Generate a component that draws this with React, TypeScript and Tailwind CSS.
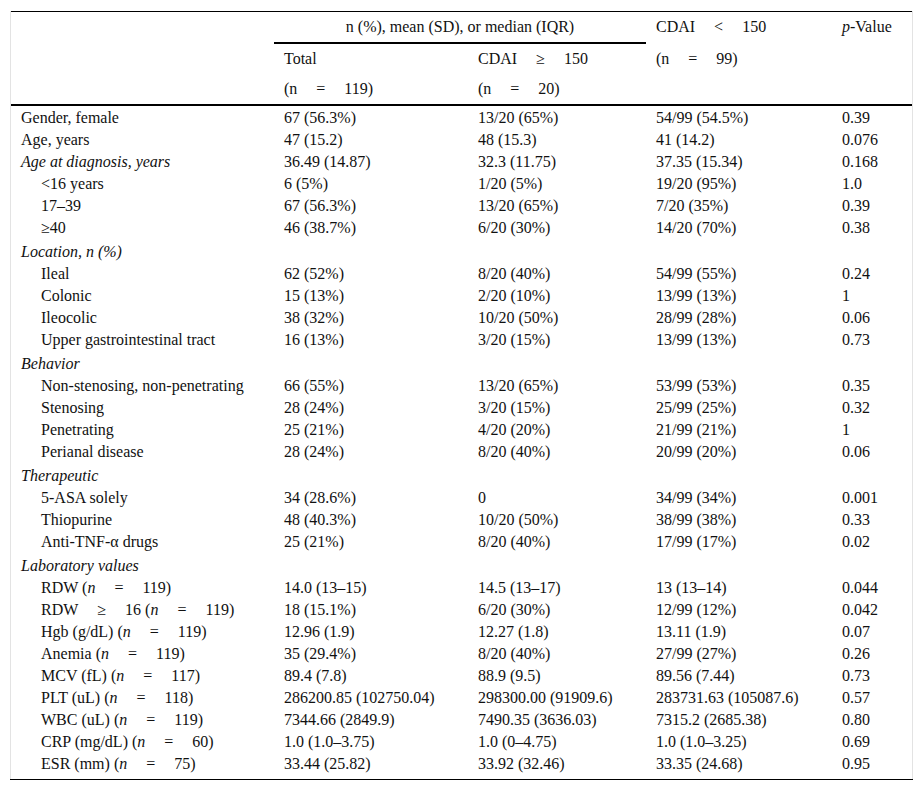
import React from "react";

// column widths: label | total | CDAI >= 150 | CDAI < 150 | p
const COLS = "grid grid-cols-[263px_194px_178px_186px_80px]";

const Gap = () => <span className="inline-block w-[19px]" />;

const Eq = ({ v, it }: { v: string; it?: boolean }) => (
  <>
    ({it ? <i>n</i> : "n"}
    <Gap />=<Gap />
    {v})
  </>
);

type Row = {
  label: React.ReactNode;
  indent?: boolean;
  italic?: boolean;
  section?: boolean;
  v?: string[];
};

const rows: Row[] = [
  { label: "Gender, female", v: ["67 (56.3%)", "13/20 (65%)", "54/99 (54.5%)", "0.39"] },
  { label: "Age, years", v: ["47 (15.2)", "48 (15.3)", "41 (14.2)", "0.076"] },
  { label: "Age at diagnosis, years", italic: true, v: ["36.49 (14.87)", "32.3 (11.75)", "37.35 (15.34)", "0.168"] },
  { label: "<16 years", indent: true, v: ["6 (5%)", "1/20 (5%)", "19/20 (95%)", "1.0"] },
  { label: "17–39", indent: true, v: ["67 (56.3%)", "13/20 (65%)", "7/20 (35%)", "0.39"] },
  { label: "≥40", indent: true, v: ["46 (38.7%)", "6/20 (30%)", "14/20 (70%)", "0.38"] },
  { label: "Location, n (%)", italic: true, section: true },
  { label: "Ileal", indent: true, v: ["62 (52%)", "8/20 (40%)", "54/99 (55%)", "0.24"] },
  { label: "Colonic", indent: true, v: ["15 (13%)", "2/20 (10%)", "13/99 (13%)", "1"] },
  { label: "Ileocolic", indent: true, v: ["38 (32%)", "10/20 (50%)", "28/99 (28%)", "0.06"] },
  { label: "Upper gastrointestinal tract", indent: true, v: ["16 (13%)", "3/20 (15%)", "13/99 (13%)", "0.73"] },
  { label: "Behavior", italic: true, section: true },
  { label: "Non-stenosing, non-penetrating", indent: true, v: ["66 (55%)", "13/20 (65%)", "53/99 (53%)", "0.35"] },
  { label: "Stenosing", indent: true, v: ["28 (24%)", "3/20 (15%)", "25/99 (25%)", "0.32"] },
  { label: "Penetrating", indent: true, v: ["25 (21%)", "4/20 (20%)", "21/99 (21%)", "1"] },
  { label: "Perianal disease", indent: true, v: ["28 (24%)", "8/20 (40%)", "20/99 (20%)", "0.06"] },
  { label: "Therapeutic", italic: true, section: true },
  { label: "5-ASA solely", indent: true, v: ["34 (28.6%)", "0", "34/99 (34%)", "0.001"] },
  { label: "Thiopurine", indent: true, v: ["48 (40.3%)", "10/20 (50%)", "38/99 (38%)", "0.33"] },
  { label: "Anti-TNF-α drugs", indent: true, v: ["25 (21%)", "8/20 (40%)", "17/99 (17%)", "0.02"] },
  { label: "Laboratory values", italic: true, section: true },
  { label: <>RDW <Eq v="119" it /></>, indent: true, v: ["14.0 (13–15)", "14.5 (13–17)", "13 (13–14)", "0.044"] },
  { label: <>RDW<Gap />≥<Gap />16 <Eq v="119" it /></>, indent: true, v: ["18 (15.1%)", "6/20 (30%)", "12/99 (12%)", "0.042"] },
  { label: <>Hgb (g/dL) <Eq v="119" it /></>, indent: true, v: ["12.96 (1.9)", "12.27 (1.8)", "13.11 (1.9)", "0.07"] },
  { label: <>Anemia <Eq v="119" it /></>, indent: true, v: ["35 (29.4%)", "8/20 (40%)", "27/99 (27%)", "0.26"] },
  { label: <>MCV (fL) <Eq v="117" it /></>, indent: true, v: ["89.4 (7.8)", "88.9 (9.5)", "89.56 (7.44)", "0.73"] },
  { label: <>PLT (uL) <Eq v="118" it /></>, indent: true, v: ["286200.85 (102750.04)", "298300.00 (91909.6)", "283731.63 (105087.6)", "0.57"] },
  { label: <>WBC (uL) <Eq v="119" it /></>, indent: true, v: ["7344.66 (2849.9)", "7490.35 (3636.03)", "7315.2 (2685.38)", "0.80"] },
  { label: <>CRP (mg/dL) <Eq v="60" it /></>, indent: true, v: ["1.0 (1.0–3.75)", "1.0 (0–4.75)", "1.0 (1.0–3.25)", "0.69"] },
  { label: <>ESR (mm) <Eq v="75" it /></>, indent: true, v: ["33.44 (25.82)", "33.92 (32.46)", "33.35 (24.68)", "0.95"] },
];

export default function App() {
  return (
    <div className="min-h-[791px] bg-white pt-[11px] pl-[10px] font-['Liberation_Serif',serif] text-[16px] text-[#111]">
      <div className="w-[903px] border-x border-[#e3e3e3] pb-[5px] border-b-0">
        <div className="border-t border-black">
          {/* header */}
          <div className={`${COLS} h-[32px]`}>
            <div />
            <div className="col-span-2 flex items-center justify-center border-b-2 border-black">
              n (%), mean (SD), or median (IQR)
            </div>
            <div className="flex items-center pb-[2px] pl-[10px] whitespace-nowrap">
              CDAI<Gap />&lt;<Gap />150
            </div>
            <div className="flex items-center pb-[2px] pl-[10px]">
              <i>p</i>-Value
            </div>
          </div>
          <div className={`${COLS} h-[30px]`}>
            <div />
            <div className="flex items-center pl-[10px]">Total</div>
            <div className="flex items-center pl-[10px] whitespace-nowrap">
              CDAI<Gap />≥<Gap />150
            </div>
            <div className="flex items-center pl-[10px] whitespace-nowrap">
              <Eq v="99" />
            </div>
            <div />
          </div>
          <div className={`${COLS} h-[32px] border-b-2 border-black`}>
            <div />
            <div className="flex items-center pl-[10px] whitespace-nowrap">
              <Eq v="119" />
            </div>
            <div className="flex items-center pl-[10px] whitespace-nowrap">
              <Eq v="20" />
            </div>
            <div />
            <div />
          </div>

          {/* body */}
          {rows.map((r, i) => (
            <div
              key={i}
              className={`${COLS} ${r.section ? "h-[24px] pt-[2px]" : "h-[22px]"}`}
            >
              <div
                className={`flex items-center whitespace-nowrap ${r.indent ? "pl-[30px]" : "pl-[10px]"} ${r.italic ? "italic" : ""}`}
              >
                {r.label}
              </div>
              {(r.v ?? ["", "", "", ""]).map((c, j) => (
                <div key={j} className="flex items-center pl-[10px] whitespace-nowrap">
                  {c}
                </div>
              ))}
            </div>
          ))}
        </div>
      </div>
      <div className="w-[903px] h-px bg-black" />
    </div>
  );
}
